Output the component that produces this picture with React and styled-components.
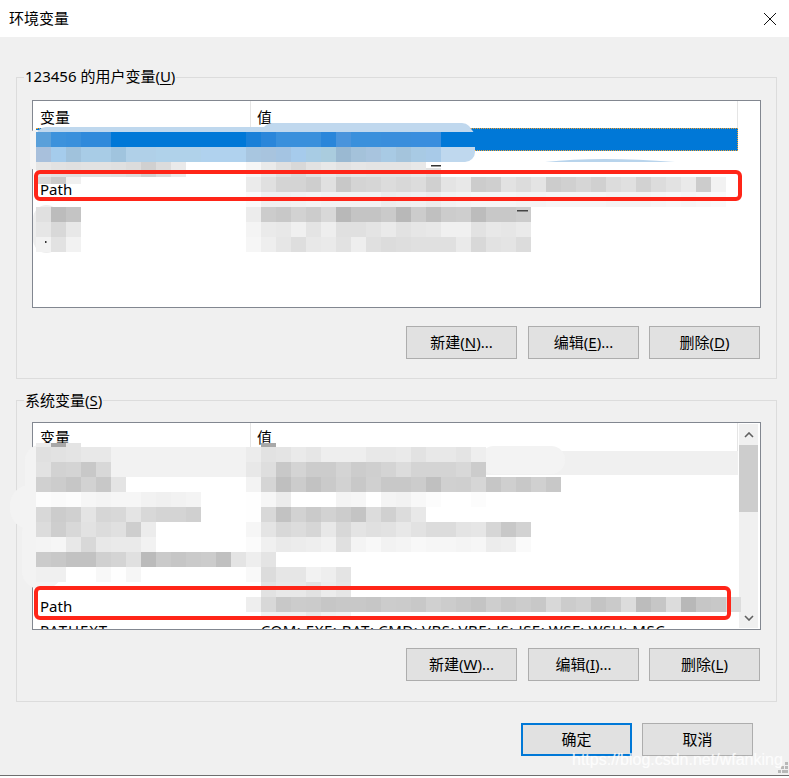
import React from "react";
import styled, { createGlobalStyle } from "styled-components";

const GlobalStyle = createGlobalStyle`
  html, body {
    margin: 0;
    padding: 0;
    background: #ffffff;
  }
`;

const uiFont = `"Noto Sans", "Noto Sans CJK SC", sans-serif`;

const Page = styled.div`
  position: relative;
  width: 789px;
  height: 778px;
  overflow: hidden;
  font-family: ${uiFont};
  font-size: 15px;
  color: #000000;
`;

const Window = styled.div`
  display: flex;
  flex-direction: column;
  height: 776px;
  box-sizing: border-box;
  border-bottom: 1px solid #6e6e6e;
  background: #f0f0f0;
`;

const TitleBar = styled.div`
  display: flex;
  align-items: center;
  justify-content: space-between;
  flex: none;
  height: 37px;
  padding: 0 12px 0 9px;
  background: #ffffff;
`;

const Title = styled.div`
  font-size: 15px;
  line-height: 37px;
`;

const Body = styled.div`
  display: flex;
  flex-direction: column;
  gap: 21px;
  padding: 40px 12px 0 16px;
`;

const Group = styled.section`
  position: relative;
  box-sizing: border-box;
  height: 302px;
  padding: ${({ $top }) => $top}px 15px 0 15px;
  border: 1px solid #dcdcdc;
`;

const Legend = styled.div`
  position: absolute;
  left: 7px;
  top: ${({ $top }) => $top}px;
  padding: 0 1px;
  line-height: 22px;
  background: #f0f0f0;
`;

const Mnemonic = styled.span`
  text-decoration: underline;
  text-underline-offset: 2px;
`;

const ListBox = styled.div`
  display: flex;
  box-sizing: border-box;
  width: 729px;
  height: 208px;
  border: 1px solid #828790;
  background: #ffffff;
  overflow: hidden;
`;

const ListContent = styled.div`
  flex: none;
  width: 705px;
  height: 100%;
  overflow: hidden;
`;

const Header = styled.div`
  display: grid;
  grid-template-columns: 217px 1fr;
  box-sizing: border-box;
  height: ${({ $height }) => $height}px;
  border-right: 1px solid #e5e5e5;
`;

const HeaderCell = styled.div`
  padding-left: ${({ $second }) => ($second ? "6px" : "7px")};
  padding-top: ${({ $offset }) => $offset}px;
  line-height: 22px;
  border-left: ${({ $second }) => ($second ? "1px solid #e5e5e5" : "none")};
`;

const Row = styled.div`
  display: grid;
  grid-template-columns: 214px 1fr;
  box-sizing: border-box;
  height: ${({ $selected }) => ($selected === "active" ? "23px" : "24px")};
  margin-left: 3px;
  margin-bottom: ${({ $selected }) => ($selected === "active" ? "3px" : "0")};
  padding-left: 4px;
  line-height: 22px;
  white-space: nowrap;
  background: ${({ $selected }) =>
    $selected === "active"
      ? "#0078d7"
      : $selected === "inactive"
        ? "#f0f0f0"
        : "transparent"};
  outline: ${({ $selected }) =>
    $selected === "active" ? "1px dotted #f0a030" : "none"};
  outline-offset: -1px;
`;

const NameCell = styled.div`
  letter-spacing: ${({ $tracking }) => $tracking || 0}px;
`;

const ValueCell = styled.div`
  padding-left: 3px;
  overflow: hidden;
  letter-spacing: 0.5px;
`;

const Scrollbar = styled.div`
  display: flex;
  flex-direction: column;
  align-items: center;
  justify-content: space-between;
  flex: none;
  width: 19px;
  margin: 1px 0 1px 1px;
  background: #f0f0f0;
`;

const ScrollArrow = styled.div`
  display: flex;
  align-items: center;
  justify-content: center;
  height: 21px;
  color: #606060;
`;

const ScrollThumb = styled.div`
  align-self: stretch;
  height: 67px;
  margin-bottom: auto;
  background: #cdcdcd;
`;

const ButtonRow = styled.div`
  display: flex;
  justify-content: flex-end;
  gap: 10px;
  width: 729px;
  padding-top: 18px;
  box-sizing: border-box;
  padding-right: 1px;

  & > :first-child {
    margin-right: 1px;
  }
`;

const Button = styled.button`
  box-sizing: border-box;
  width: 111px;
  height: 33px;
  padding: 0 0 2px;
  font: inherit;
  color: #000000;
  background: #e1e1e1;
  border: ${({ $primary }) =>
    $primary ? "2px solid #0078d7" : "1px solid #adadad"};
`;

const Footer = styled.div`
  display: flex;
  justify-content: flex-end;
  gap: 10px;
  padding: 21px 36px 0 0;
`;

const Overlay = styled.svg`
  position: absolute;
  left: 0;
  top: 0;
  pointer-events: none;
`;

const RedBox = styled.div`
  position: absolute;
  left: 34px;
  top: ${({ $top }) => $top}px;
  width: ${({ $width }) => $width}px;
  height: ${({ $height }) => $height}px;
  box-sizing: border-box;
  border: 4px solid #ff2518;
  border-radius: 6px;
  pointer-events: none;
`;

const Watermark = styled.div`
  position: absolute;
  left: 572px;
  top: 749px;
  font-family: "Liberation Sans", sans-serif;
  font-size: 16px;
  line-height: 22px;
  white-space: nowrap;
  color: rgba(255, 255, 255, 0.72);
  text-shadow: 0 0 1px rgba(255, 255, 255, 0.5);
  pointer-events: none;
`;

// pixelated cells that hide the values: each row is one strip of 15px cells
const mosaic = [
  // user variables
  { x: 36, y: 132, c: "5aa0da 3c92dc 3990dc 2f8adb 2f8adb 0078d7 0078d7 0078d7 0078d7 0078d7 0078d7 0078d7 0078d7 0078d7 1a80d8 2a86da 3a90dc 3a90dc 3a90dc 2a86da 4a94dc 3a90dc 3a90dc 3a8edc 3a8edc 3a8ede 3a8ede" },
  { x: 36, y: 147, c: "a8c0dc a5ccec a0c2dc a8cce6 a8cce6 a0c4de b0d0e8 b0d0e8 b0d2ea b0d2ea b0d2ea b0d2ee b0d2ee b0d2ee a8c6e0 a8c4de a4c4e2 a6cbec a8cce4 aaccde 9ab9d2 a4c2da a8c4de a8cae4 a4c4dc a8cae4 a8cae8" },
  { x: 36, y: 162, c: "e6 e2 e0 e2 e2 e0 dc d0 dc ea" },
  { x: 246, y: 162, c: "f6 ea e0 d8 e2 e8 e2 e6 e4 e4 e4 e8" },
  { x: 426, y: 168, h: 9, c: "e0" },
  { x: 36, y: 177, h: 7, c: "d8 ca f0" },
  { x: 246, y: 177, c: "eb e0 d4 d4 ce e0 c8 d4 d6 dc d8 dc d0 e4 e8 cc cf e2 dc e4 cc d0 d6 d0 dc e0 d2 dc e2 ea cc f2" },
  { x: 246, y: 192, c: "fa f0 f0 f2 f4 f2 f2 f2 f2 ec ee f0 ec f2 f4 f6 f6 f6 f4 f4 f6 f6 f6 f6 f4 f4 f4 f6 f8 f6 f8 fa" },
  { x: 36, y: 207, c: "e0 bc c4" },
  { x: 246, y: 207, c: "ec cc c8 d2 cc d8 b8 c4 c4 ca b8 cc c0 cc ce bc c8 c8 cc" },
  { x: 36, y: 222, c: "e6 d8 e8" },
  { x: 246, y: 222, c: "f4 ea e8 f0 e4 ee e0 e0 e4 ea e2 e6 e8 f0 f0 e2 e8 e6 ea" },
  { x: 36, y: 237, c: "f2 e2 f2" },
  { x: 246, y: 237, c: "f6 ee e6 de e8 ea e2 ee e0 dc de e0 e0 e0 ea d8 e2 e4 dc" },
  // system variables
  { x: 36, y: 443, h: 4, c: "ec a8 e4" },
  { x: 261, y: 443, h: 4, c: "a8" },
  { x: 36, y: 447, c: "e0 e2 e4 e8 e8" },
  { x: 246, y: 447, c: "ec e2 e4 ea e6 ee ee ee e8 e8 ea e2 e8 e8 e4 ee" },
  { x: 36, y: 462, c: "e2 d2 d4 c8 d8" },
  { x: 246, y: 462, c: "e8 de c8 d4 cc cc d4 cc cf d4 dc d4 d4 d4 d8 cc" },
  { x: 36, y: 477, c: "d0 cc c6 d2 c8 e4" },
  { x: 246, y: 477, c: "f3 d5 bf cc c2 ca d2 c8 d0 c8 c8 cc c0 d0 cf d6 c6 cf c8 d0 c8" },
  { x: 36, y: 492, c: "fc fa fc f6 f4 f6 f6 f2 f0 f2 f4" },
  { x: 246, y: 492, c: "fe f6 ec ff ff ff f4 f6 ff f4 f2 f8 fc ff ff fc" },
  { x: 36, y: 507, c: "d8 cc d0 e4 d6 d8 e4 d8 d4 d4 d0" },
  { x: 246, y: 507, c: "fe d8 c2 d2 ca d2 cc c4 dc d0 dc e8" },
  { x: 36, y: 522, c: "dc ce d8 e2 dc e0 ce ec" },
  { x: 246, y: 522, c: "f6 e4 d8 dc d6 e8 d8 e4 e0 e2 e8 e2 dc dc e4 e6 d6 c8 d2" },
  { x: 36, y: 537, c: "f4 f6 e8 d8 e8 ea ea f2" },
  { x: 246, y: 537, c: "fb f0 ea ec ee f2 e0 f4 f8 f2 f4 f8 f6 f6 f4 f6 ec ee fa" },
  { x: 36, y: 552, c: "cb c8 c2 c2 d0 d4 e0 bb ca c6 ca cc c0 e4 ee e4" },
  { x: 36, y: 567, c: "f0 f0 ff ff f8 fe f6" },
  { x: 246, y: 567, c: "f9 dc e6 e6 f2 ee e4" },
  { x: 261, y: 582, c: "e2 e8 e8 e2 ec e6" },
  { x: 246, y: 597, c: "ee d8 c8 cc cb c6 c8 c8 c6 cc cb c8 d0 cc c8 c4 ce c8 cc c8 d8 cc d0 c4 ca dc bc c6 dc b8 c6 c8 dc" },
  { x: 261, y: 612, h: 6, c: "f0 f0 f0 e8 f0 f2" },
];

const cellColor = (token) =>
  token.length === 2 ? `#${token}${token}${token}` : `#${token}`;

function Mosaic() {
  return (
    <Overlay width="789" height="778" viewBox="0 0 789 778">
      {/* soft smudges left by the retouching */}
      <rect x="30" y="130" width="12" height="40" rx="5" fill="#f4f4f4" />
      <rect x="36" y="127" width="439" height="35" rx="10" fill="#bfd8ee" />
      <rect x="262" y="123" width="210" height="20" rx="10" fill="#c0d8ee" />
      <rect x="441" y="132" width="34" height="15" fill="#0078d7" />
      <path d="M545 162 Q600 156 675 162 Z" fill="#b8d4ec" />
      <rect x="33" y="205" width="27" height="48" rx="14" fill="#eeeeee" />
      <rect x="25" y="445" width="35" height="60" rx="15" fill="#f3f3f3" />
      <rect x="10" y="485" width="50" height="44" rx="20" fill="#f3f3f3" />
      <rect x="22" y="515" width="40" height="74" rx="18" fill="#f3f3f3" />
      <rect x="111" y="447" width="135" height="30" fill="#f2f2f2" />
      <rect x="480" y="446" width="85" height="28" rx="14" fill="#f3f3f3" />
      {mosaic.flatMap((row) =>
        row.c.split(" ").map((token, i) => (
          <rect
            key={`${row.x}-${row.y}-${i}`}
            x={row.x + i * 15}
            y={row.y}
            width="15"
            height={row.h || 15}
            fill={cellColor(token)}
          />
        ))
      )}
      {/* bits of the hidden text that stick out of the mosaic */}
      <rect x="431" y="165" width="10" height="1.5" fill="#333333" />
      <rect x="45" y="241" width="1.5" height="2" fill="#333333" />
      <rect x="517" y="210" width="11" height="1.5" fill="#444444" />
      {/* grip in the window corner */}
      <g fill="#b8b8b8">
        <rect x="785" y="762" width="3" height="3" />
        <rect x="781" y="766" width="3" height="3" />
        <rect x="785" y="766" width="3" height="3" />
        <rect x="778" y="770" width="3" height="3" />
        <rect x="782" y="770" width="3" height="3" />
        <rect x="785" y="770" width="3" height="3" />
      </g>
    </Overlay>
  );
}

function ListHeader({ height, offset }) {
  return (
    <Header $height={height}>
      <HeaderCell $offset={offset}>变量</HeaderCell>
      <HeaderCell $second $offset={offset}>
        值
      </HeaderCell>
    </Header>
  );
}

const systemRows = [
  { selected: "inactive" },
  {},
  {},
  {},
  {},
  {},
  { name: "Path" },
  {
    name: "PATHEXT",
    tracking: 0.9,
    value: ".COM;.EXE;.BAT;.CMD;.VBS;.VBE;.JS;.JSE;.WSF;.WSH;.MSC",
  },
];

export default function App() {
  return (
    <Page>
      <GlobalStyle />
      <Window>
        <TitleBar>
          <Title>环境变量</Title>
          <svg width="14" height="14" viewBox="0 0 14 14">
            <path d="M1 1 L13 13 M13 1 L1 13" stroke="#111" strokeWidth="1" fill="none" />
          </svg>
        </TitleBar>
        <Body>
          <Group $top={22}>
            <Legend $top={-13}>
              123456 的用户变量(<Mnemonic>U</Mnemonic>)
            </Legend>
            <ListBox>
              <ListContent>
                <ListHeader height={27} offset={5} />
                <Row $selected="active" />
                <Row />
                <Row>
                  <NameCell>Path</NameCell>
                </Row>
              </ListContent>
            </ListBox>
            <ButtonRow>
              <Button>
                新建(<Mnemonic>N</Mnemonic>)...
              </Button>
              <Button>
                编辑(<Mnemonic>E</Mnemonic>)...
              </Button>
              <Button>
                删除(<Mnemonic>D</Mnemonic>)
              </Button>
            </ButtonRow>
          </Group>
          <Group $top={21}>
            <Legend $top={-12}>
              系统变量(<Mnemonic>S</Mnemonic>)
            </Legend>
            <ListBox>
              <ListContent>
                <ListHeader height={28} offset={3} />
                {systemRows.map((row, i) => (
                  <Row key={i} $selected={row.selected}>
                    <NameCell $tracking={row.tracking}>{row.name}</NameCell>
                    {row.value && <ValueCell>{row.value}</ValueCell>}
                  </Row>
                ))}
              </ListContent>
              <Scrollbar>
                <ScrollArrow>
                  <svg width="10" height="6" viewBox="0 0 10 6">
                    <path d="M1 5 L5 1 L9 5" stroke="currentColor" strokeWidth="1.6" fill="none" />
                  </svg>
                </ScrollArrow>
                <ScrollThumb />
                <ScrollArrow>
                  <svg width="10" height="6" viewBox="0 0 10 6">
                    <path d="M1 1 L5 5 L9 1" stroke="currentColor" strokeWidth="1.6" fill="none" />
                  </svg>
                </ScrollArrow>
              </Scrollbar>
            </ListBox>
            <ButtonRow>
              <Button>
                新建(<Mnemonic>W</Mnemonic>)...
              </Button>
              <Button>
                编辑(<Mnemonic>I</Mnemonic>)...
              </Button>
              <Button>
                删除(<Mnemonic>L</Mnemonic>)
              </Button>
            </ButtonRow>
          </Group>
        </Body>
        <Footer>
          <Button $primary>确定</Button>
          <Button>取消</Button>
        </Footer>
      </Window>
      <Mosaic />
      <RedBox $top={170} $width={708} $height={31} />
      <RedBox $top={586} $width={697} $height={34} />
      <Watermark>https://blog.csdn.net/wfanking</Watermark>
    </Page>
  );
}
